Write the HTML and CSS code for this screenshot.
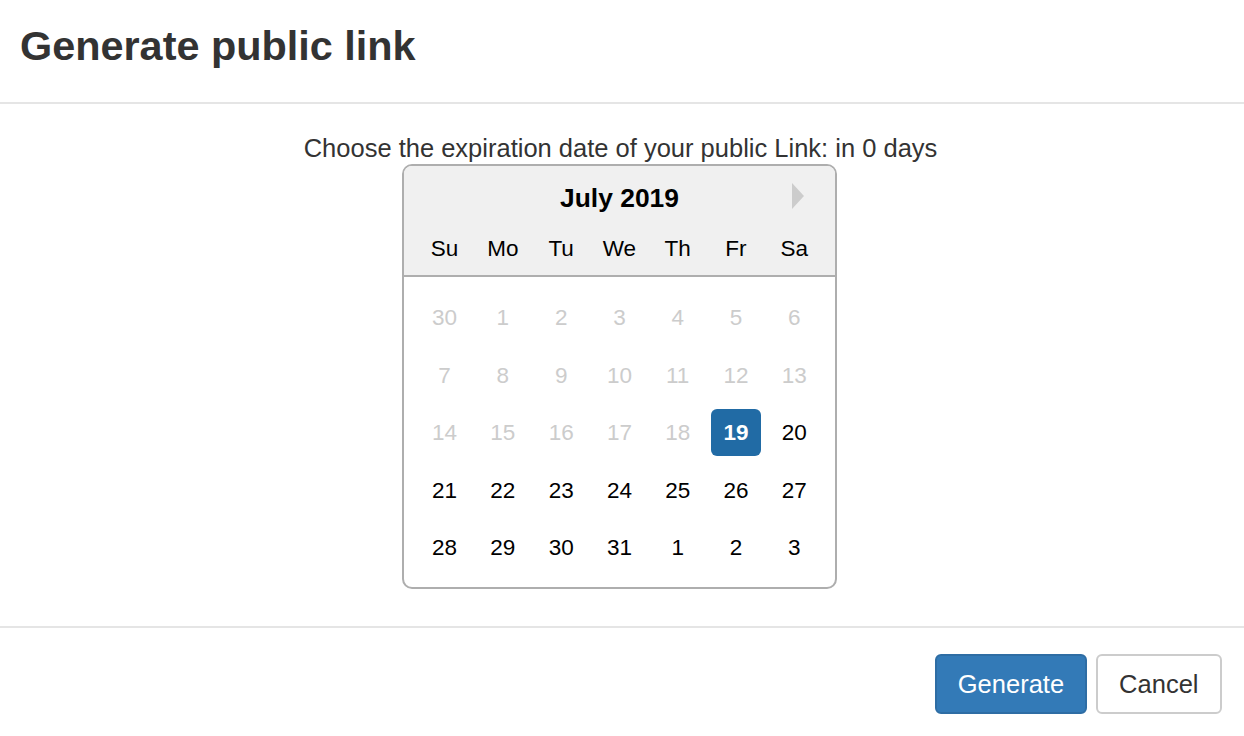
FILE: index.html
```html
<!DOCTYPE html>
<html>
<head>
<meta charset="utf-8">
<link rel="stylesheet" href="styles.css">
</head>
<body>
<div class="modal">
  <div class="modal-header">
    <h4 class="modal-title">Generate public link</h4>
  </div>
  <div class="modal-body">
    <div class="prompt">Choose the expiration date of your public Link: in 0 days</div>
    <div class="calendar">
      <div class="cal-header">
        <span class="nav-next"></span>
        <div class="cur-month">July 2019</div>
        <div class="week names">
          <div class="cell">Su</div><div class="cell">Mo</div><div class="cell">Tu</div><div class="cell">We</div><div class="cell">Th</div><div class="cell">Fr</div><div class="cell">Sa</div>
        </div>
      </div>
      <div class="month">
        <div class="week">
          <div class="cell dis">30</div><div class="cell dis">1</div><div class="cell dis">2</div><div class="cell dis">3</div><div class="cell dis">4</div><div class="cell dis">5</div><div class="cell dis">6</div>
        </div>
        <div class="week">
          <div class="cell dis">7</div><div class="cell dis">8</div><div class="cell dis">9</div><div class="cell dis">10</div><div class="cell dis">11</div><div class="cell dis">12</div><div class="cell dis">13</div>
        </div>
        <div class="week">
          <div class="cell dis">14</div><div class="cell dis">15</div><div class="cell dis">16</div><div class="cell dis">17</div><div class="cell dis">18</div><div class="cell sel">19</div><div class="cell">20</div>
        </div>
        <div class="week">
          <div class="cell">21</div><div class="cell">22</div><div class="cell">23</div><div class="cell">24</div><div class="cell">25</div><div class="cell">26</div><div class="cell">27</div>
        </div>
        <div class="week">
          <div class="cell">28</div><div class="cell">29</div><div class="cell">30</div><div class="cell">31</div><div class="cell">1</div><div class="cell">2</div><div class="cell">3</div>
        </div>
      </div>
    </div>
  </div>
  <div class="modal-footer">
    <button class="btn btn-primary">Generate</button>
    <button class="btn btn-default">Cancel</button>
  </div>
</div>
</body>
</html>
```

FILE: styles.css
```css
* { box-sizing: border-box; }
html, body { margin: 0; padding: 0; background: #fff; }
body {
  font-family: "Liberation Sans", Arial, Helvetica, sans-serif;
  color: #333;
  width: 1244px;
  height: 736px;
  overflow: hidden;
}
.modal-header {
  height: 104px;
  padding: 23px 20px 0 20px;
  border-bottom: 2px solid #e5e5e5;
}
.modal-title {
  margin: 0;
  font-size: 41.4px;
  font-weight: bold;
  line-height: 46px;
  color: #333;
}
.modal-body {
  height: 522px;
  padding: 29px 0 0 0;
  display: flex;
  flex-direction: column;
  align-items: center;
}
.prompt {
  font-size: 25.5px;
  line-height: 30px;
  margin-right: 3px;
  margin-bottom: 1px;
}
.calendar {
  position: relative;
  width: 435px;
  border: 2px solid #aeaeae;
  border-radius: 10px;
  background: #fff;
  color: #000;
  font-size: 22.5px;
  margin-right: 5px;
}
.cal-header {
  background: #f0f0f0;
  border-bottom: 2px solid #aeaeae;
  border-radius: 8px 8px 0 0;
  padding: 16px 11.45px 0 11.45px;
}
.nav-next {
  position: absolute;
  top: 17px;
  right: 31px;
  width: 0;
  height: 0;
  border-top: 13px solid transparent;
  border-bottom: 13px solid transparent;
  border-left: 12px solid #ccc;
}
.cur-month {
  text-align: center;
  font-weight: bold;
  font-size: 26.4px;
  line-height: 32px;
  height: 32px;
  margin-bottom: 5px;
}
.month {
  padding: 12.5px 11.45px 10.5px 11.45px;
}
.week {
  display: flex;
}
.cell {
  width: 50px;
  height: 47px;
  margin: 5.25px 4.15px;
  display: flex;
  align-items: center;
  justify-content: center;
  line-height: 47px;
}
.names .cell {
  margin-top: 5.5px;
  margin-bottom: 3px;
}
.cell.dis { color: #ccc; }
.cell.sel {
  background: #216ba5;
  color: #fff;
  font-weight: bold;
  border-radius: 6px;
}
.modal-footer {
  border-top: 2px solid #e5e5e5;
  padding: 26px 22px 0 0;
  display: flex;
  justify-content: flex-end;
  gap: 9px;
}
.btn {
  font-family: "Liberation Sans", Arial, Helvetica, sans-serif;
  font-size: 25.5px;
  height: 60px;
  padding: 0 22px;
  border-radius: 6px;
  border: 2px solid;
  line-height: 56px;
}
.btn-primary {
  background: #337ab7;
  border-color: #2e6da4;
  color: #fff;
  padding: 0 20.5px;
}
.btn-default {
  background: #fff;
  border-color: #ccc;
  color: #333;
  padding: 0 21.5px;
}
```
